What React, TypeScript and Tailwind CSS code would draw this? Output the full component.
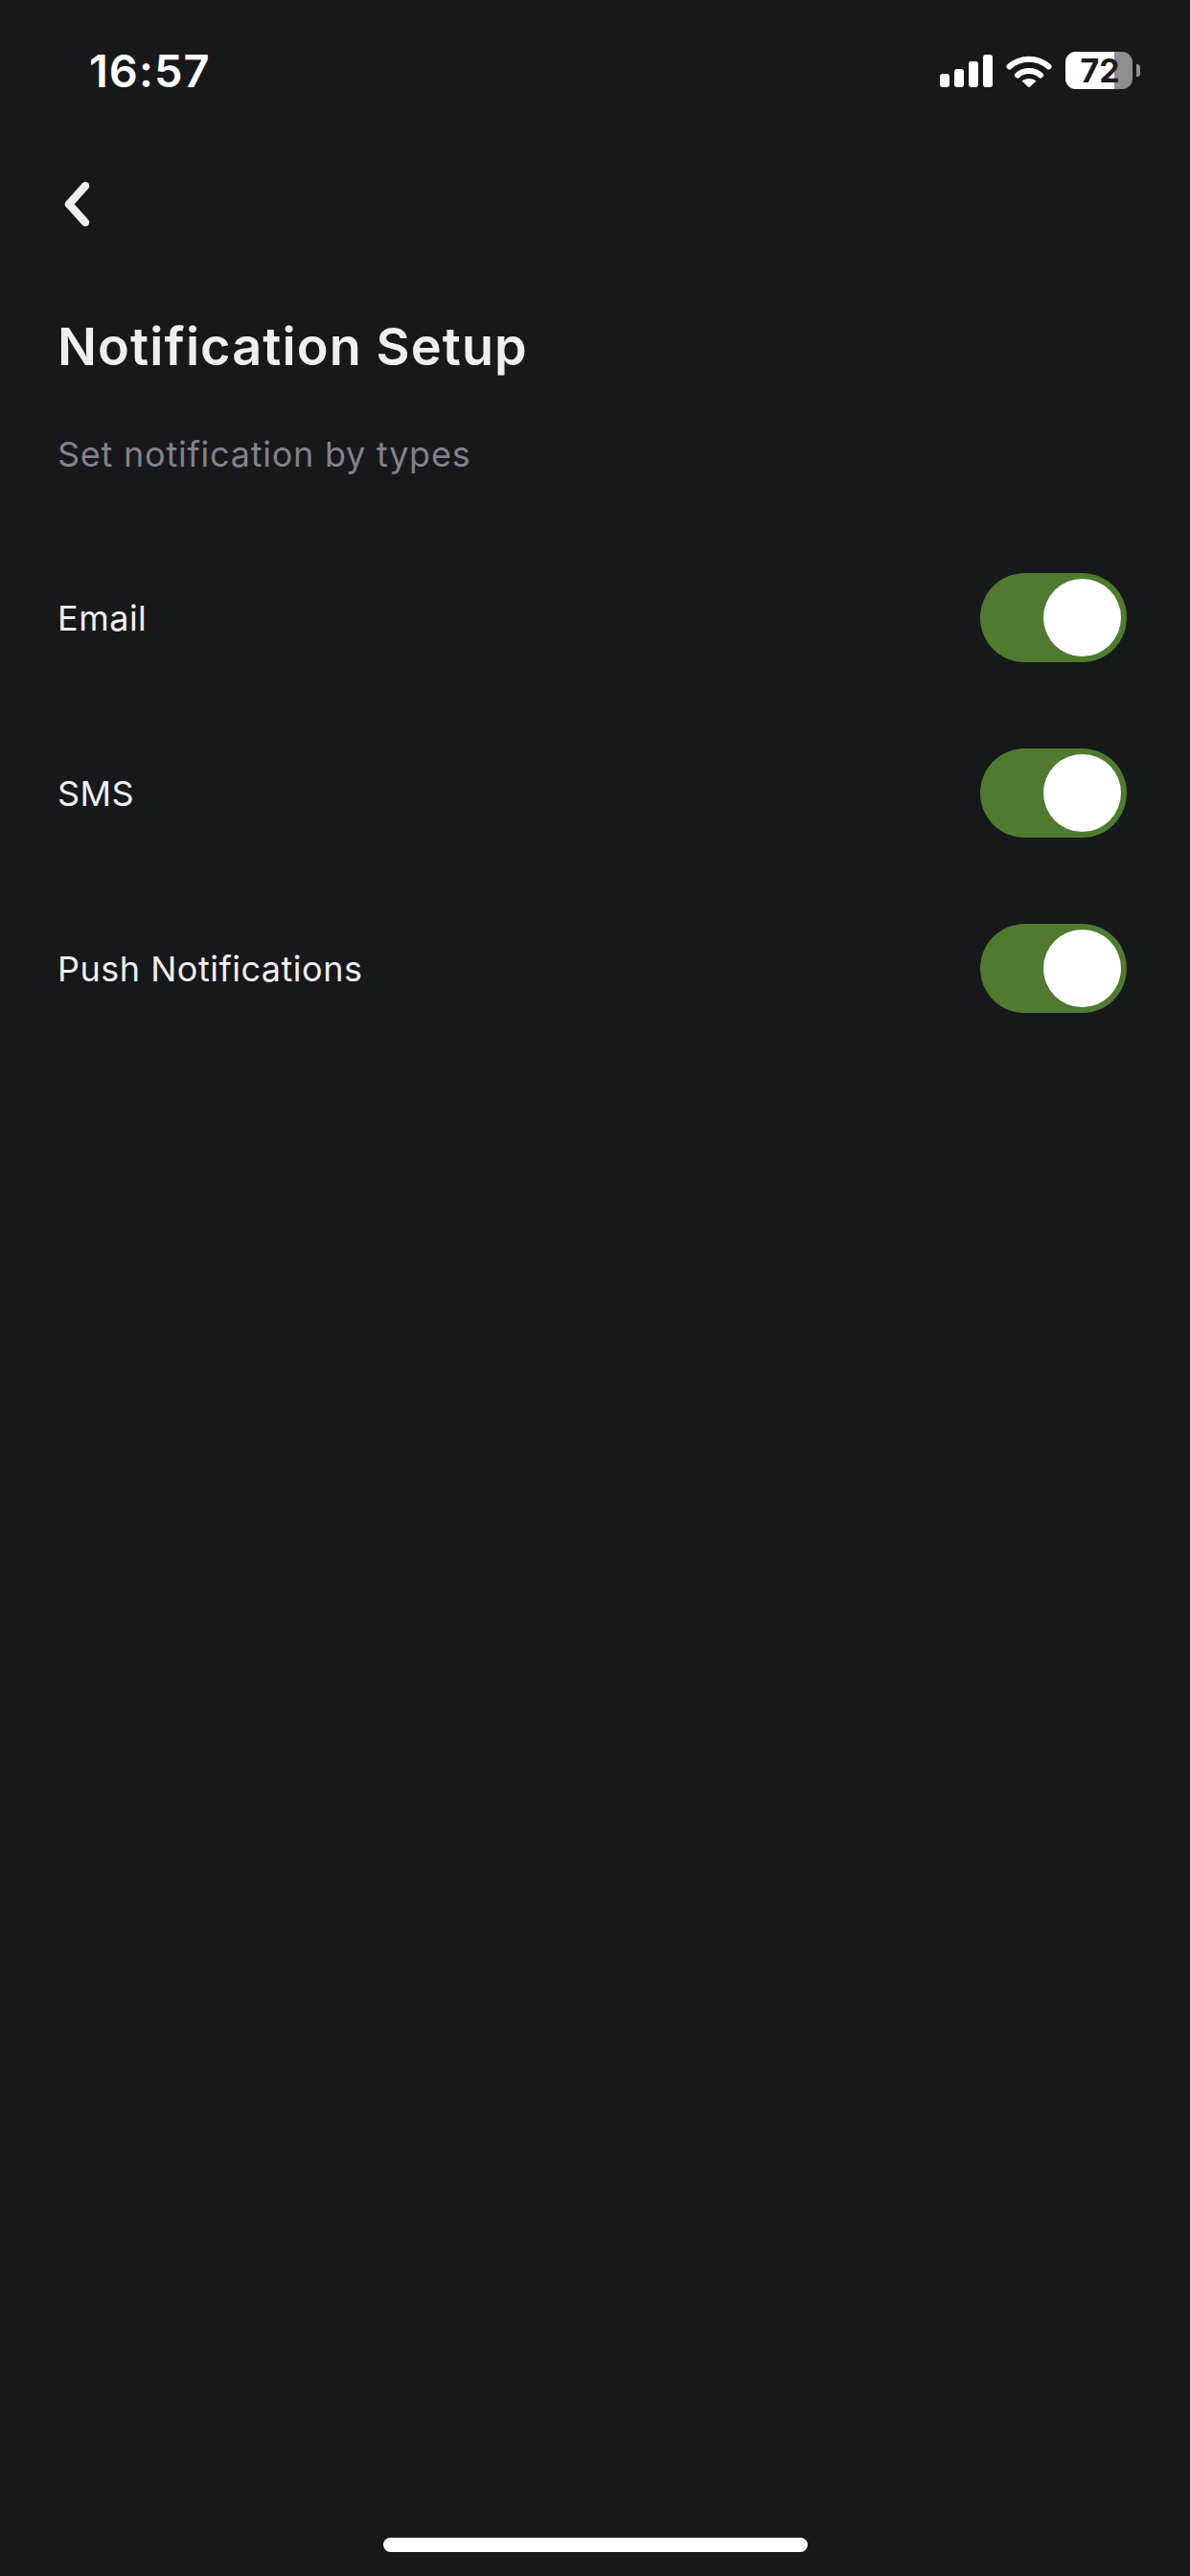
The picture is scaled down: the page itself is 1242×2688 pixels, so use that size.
import React from "react";

const rows = ["Email", "SMS", "Push Notifications"];

const SignalBars = () => (
  <div className="flex items-end gap-[5px] h-[34px]">
    <div className="w-[10px] h-[14px] rounded-[3px] bg-white" />
    <div className="w-[10px] h-[19px] rounded-[3px] bg-white" />
    <div className="w-[10px] h-[27px] rounded-[3px] bg-white" />
    <div className="w-[10px] h-[34px] rounded-[3px] bg-white" />
  </div>
);

const WifiIcon = () => (
  <svg width="48" height="34" viewBox="0 0 48 34" fill="none">
    <path d="M3.5 12.5C15 2 33 2 44.5 12.5" stroke="white" strokeWidth="6" strokeLinecap="round" />
    <path d="M12 21.5C18.5 15.5 29.500 15.500 36 21.500" stroke="white" strokeWidth="6" strokeLinecap="round" />
    <path d="M16.500 27.500C20.500 24 27.500 24 31.500 27.500L24 34.500Z" fill="white" />
  </svg>
);

const Battery = () => (
  <div className="flex items-center gap-[4px]">
    <div className="relative w-[70px] h-[39px] rounded-[11px] bg-[#8e8e8e] overflow-hidden flex items-center justify-center">
      <div className="absolute left-0 top-0 bottom-0 w-[51px] bg-white" />
      <span className="relative text-[34px] font-bold leading-none text-[#1c1c1e] pl-[2px] font-['Inter',sans-serif]">72</span>
    </div>
    <div className="w-[4px] h-[13px] rounded-r-[3px] bg-[#8e8e8e]" />
  </div>
);

const Toggle = () => (
  <div className="w-[153px] h-[93px] rounded-full bg-[#4f7a30] flex items-center justify-end pr-[6px]">
    <div className="w-[81px] h-[81px] rounded-full bg-white" />
  </div>
);

export default function App() {
  return (
    <div className="h-[2688px] bg-[#17181a] flex flex-col font-['Inter',sans-serif] overflow-hidden">
      {/* status bar */}
      <div className="flex items-center justify-between pt-[54px] pl-[93px] pr-[52px]">
        <span className="text-[47px] leading-[34px] font-semibold text-white tracking-[1px]">16:57</span>
        <div className="flex items-center gap-[14px]">
          <SignalBars />
          <WifiIcon />
          <Battery />
        </div>
      </div>

      <div className="pl-[60px] pr-[66px]">
        <svg width="34" height="50" viewBox="0 0 34 50" fill="none" className="mt-[95px] ml-[4px]">
          <path d="M25 6L8 25L25 44" stroke="#eeeff1" strokeWidth="8.500" strokeLinecap="round" strokeLinejoin="round" />
        </svg>

        <h1 className="mt-[92px] text-[54px] leading-[64px] font-semibold tracking-[1.1px] text-[#eeeff1]">Notification Setup</h1>
        <p className="mt-[56px] text-[36px] leading-[48px] tracking-[0.76px] text-[#82828a]">Set notification by types</p>

        <div className="mt-[100px] flex flex-col gap-[90px]">
          {rows.map((label) => (
            <div key={label} className="flex items-center justify-between">
              <span className="text-[36px] tracking-[0.5px] text-[#eeeff1]">{label}</span>
              <Toggle />
            </div>
          ))}
        </div>
      </div>

      {/* home indicator */}
      <div className="mt-auto mb-[25px] mx-auto w-[443px] h-[15px] rounded-full bg-white" />
    </div>
  );
}
